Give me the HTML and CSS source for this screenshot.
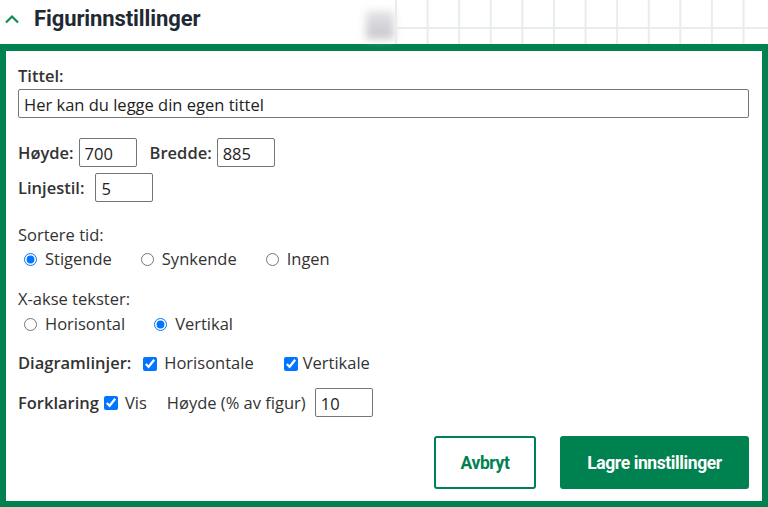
FILE: index.html
```html
<!DOCTYPE html>
<html lang="no">
<head>
    <meta charset="UTF-8">
    <meta name="viewport" content="width=device-width, initial-scale=1.0">
    <title>Figurinnstillinger</title>
    <link rel="stylesheet" href="styles.css">
</head>
<body>
    <div class="header">
        <svg class="chevron" width="14" height="10" viewBox="0 0 14 10">
            <path d="M1 8.5 L7 2.5 L13 8.5" fill="none" stroke="#118a57" stroke-width="2.2"/>
        </svg>
        <h1>Figurinnstillinger</h1>
        <div class="blurred"></div>
        <div class="grid"></div>
    </div>

    <div class="panel">
        <!-- Tittel -->
        <div class="field">
            <label class="lbl" for="tittel">Tittel:</label>
            <input id="tittel" class="text wide" type="text" value="Her kan du legge din egen tittel">
        </div>

        <!-- Størrelse -->
        <div class="row size-row">
            <label class="lbl" for="hoyde">Høyde:</label>
            <input id="hoyde" class="text num" type="text" value="700">
            <label class="lbl second" for="bredde">Bredde:</label>
            <input id="bredde" class="text num" type="text" value="885">
        </div>
        <div class="row size-row">
            <label class="lbl" for="linjestil">Linjestil:</label>
            <input id="linjestil" class="text num linje" type="text" value="5">
        </div>

        <!-- Sortering -->
        <div class="group">
            <div class="heading">Sortere tid:</div>
            <div class="options">
                <label class="opt"><input type="radio" name="sort" checked> Stigende</label>
                <label class="opt"><input type="radio" name="sort"> Synkende</label>
                <label class="opt"><input type="radio" name="sort"> Ingen</label>
            </div>
        </div>

        <div class="group">
            <div class="heading">X-akse tekster:</div>
            <div class="options">
                <label class="opt"><input type="radio" name="xakse"> Horisontal</label>
                <label class="opt"><input type="radio" name="xakse" checked> Vertikal</label>
            </div>
        </div>

        <div class="row lines-row">
            <span class="lbl">Diagramlinjer:</span>
            <label class="chk"><input type="checkbox" checked> Horisontale</label>
            <label class="chk far"><input type="checkbox" checked> Vertikale</label>
        </div>

        <div class="row legend-row">
            <span class="lbl">Forklaring</span>
            <label class="chk tight"><input type="checkbox" checked> Vis</label>
            <label class="plain" for="forkl">Høyde (% av figur)</label>
            <input id="forkl" class="text num" type="text" value="10">
        </div>

        <div class="actions">
            <button class="btn cancel" type="button">Avbryt</button>
            <button class="btn save" type="button">Lagre innstillinger</button>
        </div>
    </div>
</body>
</html>
```

FILE: styles.css
```css
body {
    margin: 0;
    font-family: "Open Sans", "Noto Sans", sans-serif;
    font-size: 16.5px;
    color: #333;
    background: #fff;
    width: 768px;
    height: 507px;
    overflow: hidden;
}

/* Header */
.header {
    display: flex;
    align-items: center;
    height: 44px;
    position: relative;
}
.chevron {
    margin-left: 5px;
    margin-right: 15px;
    margin-top: -6px;
}
h1 {
    margin: 0;
    font-family: Roboto, "Liberation Sans", sans-serif;
    font-weight: 700;
    font-size: 22px;
    color: #1f2933;
    letter-spacing: -0.1px;
    margin-top: -8px;
}
.blurred {
    position: absolute;
    left: 366px;
    top: 11px;
    width: 28px;
    height: 28px;
    background: linear-gradient(#e4e4e8, #c4c4ca);
    filter: blur(4px);
}
.grid {
    position: absolute;
    left: 395px;
    top: 0;
    right: 0;
    height: 44px;
    background-image:
        linear-gradient(to right, #e8ecec 1.5px, transparent 1.5px),
        linear-gradient(to bottom, #e8ecec 1.5px, transparent 1.5px);
    background-size: 31.6px 31.6px;
    background-position: 0 -4.5px;
}

/* Panel */
.panel {
    border-style: solid;
    border-color: #008250;
    border-width: 7px 6px 6px 6px;
    padding: 14px 13px 13px 12px;
    box-sizing: border-box;
    height: 463px;
}
.lbl {
    font-weight: 600;
    color: #333;
}
.heading {
    line-height: 22px;
}
.field .lbl {
    display: block;
    line-height: 22px;
    margin-bottom: 2px;
}
.text {
    font-family: "Open Sans", "Noto Sans", sans-serif;
    font-size: 16.5px;
    color: #222;
    border: 1px solid #767676;
    border-radius: 2px;
    padding: 2px 5px 0 5px;
    height: 29px;
    box-sizing: border-box;
    background: #fff;
    margin: 0;
}
.wide {
    width: 100%;
    display: block;
}
.num {
    width: 58px;
}

.row {
    display: flex;
    align-items: center;
    line-height: 22px;
}
.size-row .lbl {
    margin-right: 5px;
}
.size-row .second {
    margin-left: 13px;
}
.size-row {
    margin-top: 6px;
}
.field + .size-row {
    margin-top: 20px;
}
.linje {
    margin-left: 6px;
}

/* Radio groups */
.group {
    margin-top: 22px;
}
.group + .group {
    margin-top: 18px;
}
.options {
    display: flex;
    margin-top: 2px;
}
.group + .group .options {
    margin-top: 3px;
}
.opt {
    display: flex;
    align-items: center;
    margin-right: 23px;
    line-height: 22px;
}
.opt input {
    margin: 1px 8px 0 6px;
    width: 13px;
    height: 13px;
}

/* Checkboxes */
.lines-row {
    margin-top: 17px;
}
.chk {
    display: flex;
    align-items: center;
}
.chk input {
    margin: 1px 7px 0 12px;
    width: 14px;
    height: 14px;
}
.chk.far input {
    margin-left: 30px;
    margin-right: 5px;
}
.chk.tight input {
    margin-left: 5px;
    margin-right: 7px;
}
.legend-row {
    margin-top: 14px;
}
.plain {
    margin-left: 20px;
    margin-right: 9px;
}

/* Buttons */
.actions {
    display: flex;
    justify-content: flex-end;
    gap: 24px;
    margin-top: 19px;
}
.btn {
    font-family: Roboto, "Liberation Sans", sans-serif;
    font-weight: 700;
    font-size: 17.5px;
    height: 53px;
    border-radius: 3px;
    cursor: pointer;
    letter-spacing: -0.4px;
}
.cancel {
    width: 102px;
    background: #fff;
    color: #008250;
    border: 2px solid #008250;
}
.save {
    width: 189px;
    background: #008250;
    color: #fff;
    border: none;
}
```
